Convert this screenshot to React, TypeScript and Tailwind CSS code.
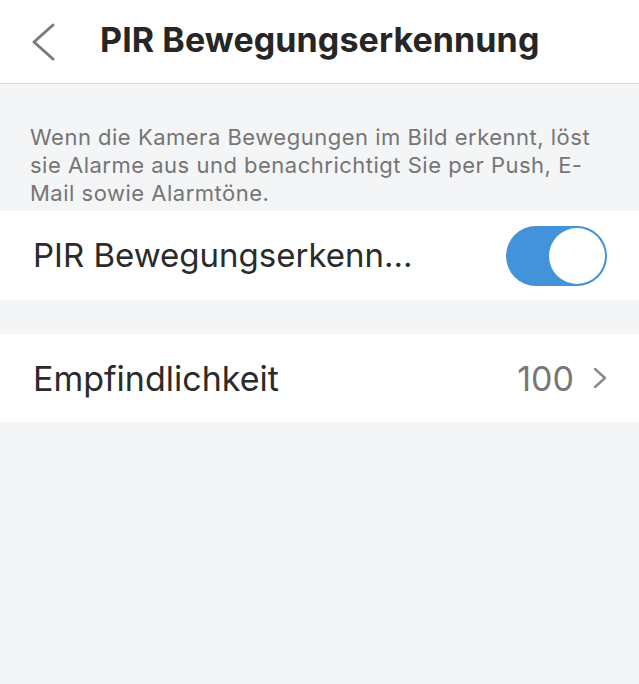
export default function App() {
  return (
    <div className="w-[639px] h-[684px] bg-[#f4f5f7] font-['Inter',sans-serif] overflow-hidden">
      <div className="h-[84px] bg-white border-b border-[#d9d9dc] flex items-center">
        <svg className="ml-[32px] shrink-0" width="24" height="38" viewBox="0 0 24 38" fill="none">
          <polyline points="21,2 2,19 21,36" stroke="#7a7a7a" strokeWidth="3" strokeLinecap="round" strokeLinejoin="round" />
        </svg>
        <h1 className="ml-[44px] text-[34px] font-bold text-[#262626] tracking-[0.1px] -mt-[4px]">PIR Bewegungserkennung</h1>
      </div>

      <p className="px-[30px] pt-[39px] pb-[4px] text-[22px] leading-[28px] tracking-[0.5px] text-[#757575]">
        Wenn die Kamera Bewegungen im Bild erkennt, löst sie Alarme aus und benachrichtigt Sie per Push, E-Mail sowie Alarmtöne.
      </p>

      <div className="h-[89px] bg-white flex items-center justify-between pl-[33px] pr-[32px]">
        <span className="text-[33px] text-[#2b2b2b]">PIR Bewegungserkenn...</span>
        <div className="w-[101px] h-[60px] rounded-full bg-[#4293d9] p-[2px] flex justify-end">
          <div className="w-[56px] h-[56px] rounded-full bg-white" />
        </div>
      </div>

      <div className="mt-[34px] h-[88px] bg-white flex items-center justify-between pl-[33px] pr-[32px]">
        <span className="text-[34px] text-[#2b2b2b]">Empfindlichkeit</span>
        <div className="flex items-center gap-[19px]">
          <span className="text-[34px] text-[#777]">100</span>
          <svg width="14" height="22" viewBox="0 0 14 22" fill="none">
            <polyline points="2,2 12,11 2,20" stroke="#8a8a8a" strokeWidth="2.4" strokeLinecap="round" strokeLinejoin="round" />
          </svg>
        </div>
      </div>
    </div>
  );
}
